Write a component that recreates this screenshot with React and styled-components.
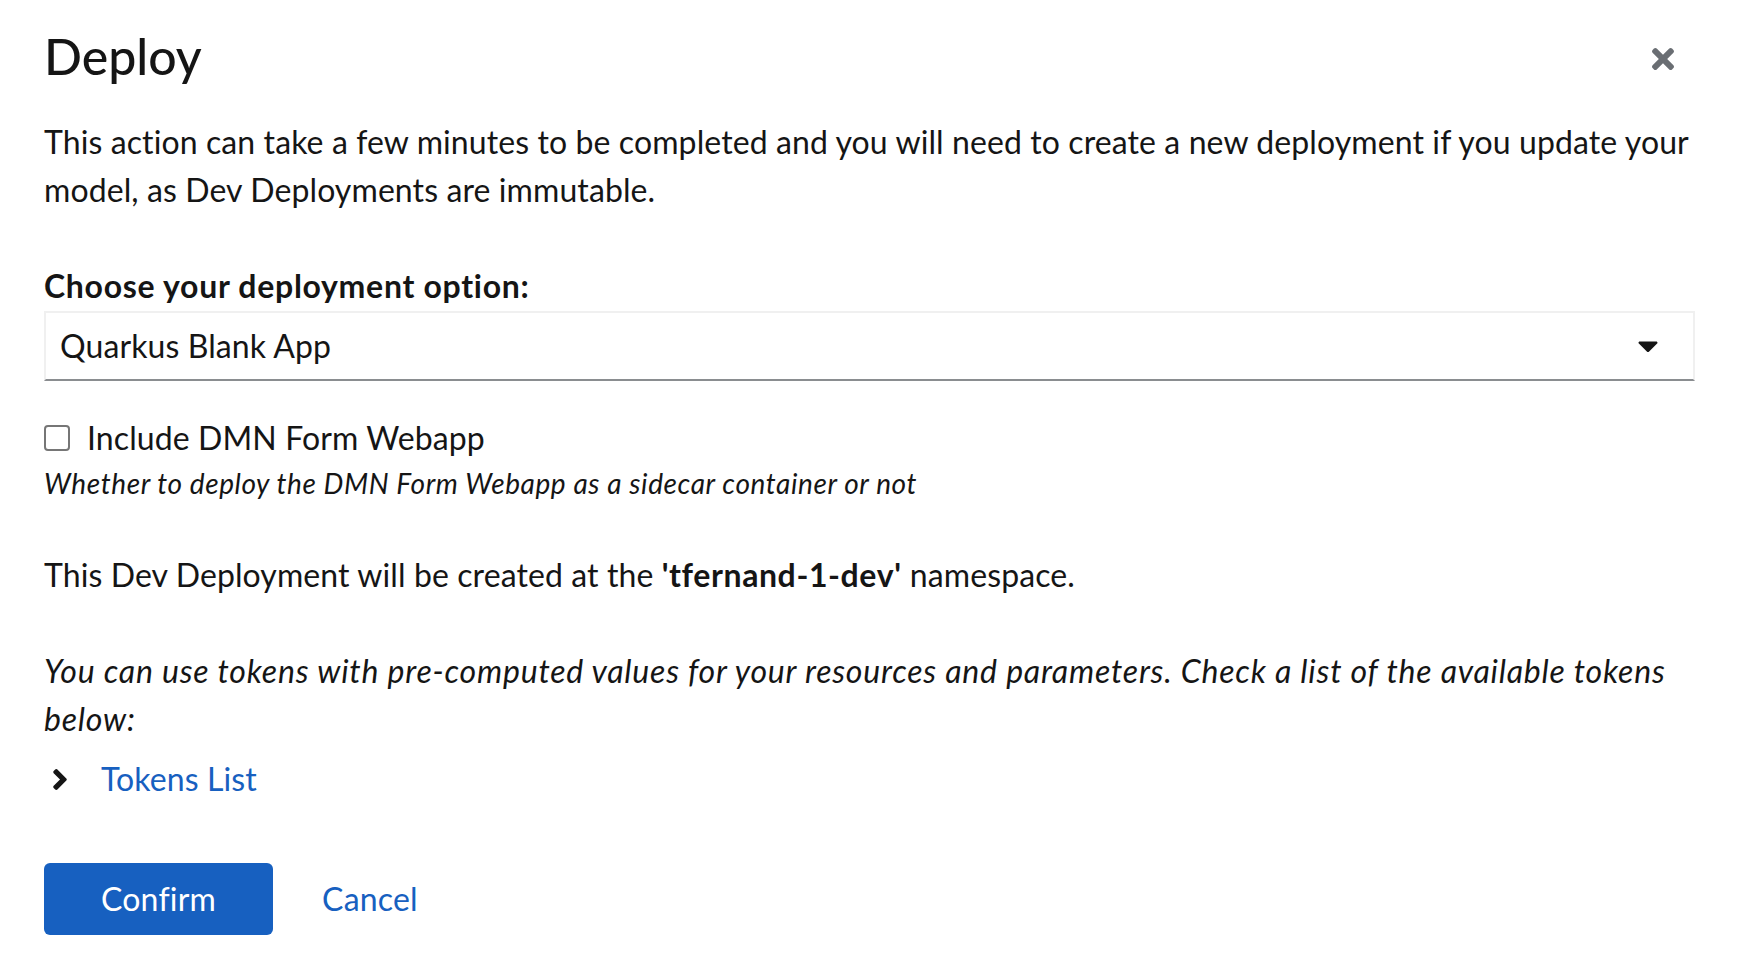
import React from "react";
import styled, { createGlobalStyle } from "styled-components";

const GlobalStyle = createGlobalStyle`
  html, body {
    margin: 0;
    padding: 0;
    background: #ffffff;
  }
  body {
    font-family: Lato, "Noto Sans", "Liberation Sans", sans-serif;
    color: #151515;
  }
  * { box-sizing: border-box; }
`;

const Modal = styled.div`
  position: relative;
  display: flex;
  flex-direction: column;
  padding: 25px 48px 40px 44px;
  font-size: 32px;
  line-height: 48px;
  letter-spacing: 0.1px;
`;

const Header = styled.header`
  display: flex;
  justify-content: space-between;
  align-items: flex-start;
`;

const Title = styled.h1`
  margin: 0;
  font-size: 50px;
  line-height: 62px;
  font-weight: 500;
  letter-spacing: 0;
  color: #151515;
`;

const CloseButton = styled.button`
  display: flex;
  align-items: center;
  justify-content: center;
  width: 64px;
  height: 62px;
  margin-top: 3px;
  padding: 0;
  border: none;
  background: transparent;
  color: #6a6e73;
  cursor: pointer;
`;

const Paragraph = styled.p`
  margin: ${(p) => p.$mt || 0}px 0 0 0;
  font-size: 32px;
  line-height: 48px;
  font-style: ${(p) => (p.$italic ? "italic" : "normal")};
  letter-spacing: ${(p) => (p.$italic ? "0.8px" : "0.1px")};
`;

const Strong = styled.b`
  font-weight: 700;
  letter-spacing: 0.6px;
`;

const FormGroup = styled.div`
  display: flex;
  flex-direction: column;
  margin-top: ${(p) => p.$mt || 0}px;
`;

const Label = styled.label`
  font-size: 32px;
  line-height: 48px;
  font-weight: 700;
  letter-spacing: 0.7px;
`;

const SelectBox = styled.div`
  display: flex;
  align-items: center;
  justify-content: space-between;
  height: 70px;
  margin-top: 1px;
  padding: 0 35px 0 14px;
  border: 2px solid #f0f0f0;
  border-bottom-color: #8a8d90;
  font-size: 32px;
  color: #151515;
  background: #fff;
`;

const CheckRow = styled.label`
  display: flex;
  align-items: center;
  gap: 17px;
  font-size: 32px;
  line-height: 48px;
`;

const Checkbox = styled.input`
  appearance: none;
  margin: 0;
  width: 26px;
  height: 26px;
  border: 2px solid #767676;
  border-radius: 4px;
  background: #fff;
  flex-shrink: 0;
`;

const Helper = styled.div`
  font-size: 28px;
  line-height: 42px;
  font-style: italic;
  letter-spacing: 0.6px;
  color: #151515;
`;

const ExpandToggle = styled.div`
  display: flex;
  align-items: center;
  height: 48px;
  margin-top: 12px;
`;

const ToggleIcon = styled.span`
  display: flex;
  align-items: center;
  justify-content: center;
  width: 32px;
  margin-right: 25px;
  color: #151515;
`;

const LinkText = styled.span`
  color: #1760c0;
  font-size: 32px;
`;

const Actions = styled.div`
  display: flex;
  gap: 16px;
  margin-top: 60px;
`;

const Button = styled.button`
  height: 72px;
  padding: 0 ${(p) => (p.$link ? 33 : 57)}px;
  border: none;
  border-radius: 6px;
  font-family: inherit;
  font-size: 32px;
  line-height: 48px;
  letter-spacing: 0.2px;
  cursor: pointer;
  background: ${(p) => (p.$link ? "transparent" : "#1760c0")};
  color: ${(p) => (p.$link ? "#1760c0" : "#ffffff")};
`;

const CloseIcon = () => (
  <svg width="22" height="22" viewBox="0 80 352 352" fill="currentColor" aria-hidden="true">
    <path d="M242.72 256l100.07-100.07c12.28-12.28 12.28-32.19 0-44.48l-22.24-22.24c-12.28-12.28-32.19-12.28-44.48 0L176 189.28 75.93 89.21c-12.28-12.28-32.19-12.28-44.48 0L9.21 111.45c-12.28 12.28-12.28 32.19 0 44.48L109.28 256 9.21 356.07c-12.28 12.28-12.28 32.19 0 44.48l22.24 22.24c12.28 12.28 32.2 12.28 44.48 0L176 322.72l100.07 100.07c12.28 12.28 32.2 12.28 44.48 0l22.24-22.24c12.28-12.28 12.28-32.19 0-44.48L242.72 256z" />
  </svg>
);

const CaretDown = () => (
  <svg width="20" height="11" viewBox="4 186 312 172" fill="currentColor" aria-hidden="true">
    <path d="M31.3 192h257.3c17.8 0 26.7 21.5 14.1 34.1L174.1 354.8c-7.8 7.8-20.5 7.8-28.3 0L17.2 226.1C4.6 213.5 13.5 192 31.3 192z" />
  </svg>
);

const AngleRight = () => (
  <svg width="14" height="21" viewBox="24 96 208 320" fill="currentColor" aria-hidden="true">
    <path d="M224.3 273l-136 136c-9.4 9.4-24.6 9.4-33.9 0l-22.6-22.6c-9.4-9.4-9.4-24.6 0-33.9l96.4-96.4-96.4-96.4c-9.4-9.4-9.4-24.6 0-33.9L54.3 103c9.4-9.4 24.6-9.4 33.9 0l136 136c9.5 9.4 9.5 24.6.1 34z" />
  </svg>
);

export default function App() {
  return (
    <>
      <GlobalStyle />
      <Modal>
        <Header>
          <Title>Deploy</Title>
          <CloseButton aria-label="Close">
            <CloseIcon />
          </CloseButton>
        </Header>

        <Paragraph $mt={28}>
          This action can take a few minutes to be completed and you will need to create a new deployment if you update your
          model, as Dev Deployments are immutable.
        </Paragraph>

        <FormGroup $mt={48}>
          <Label>Choose your deployment option:</Label>
          <SelectBox>
            <span>Quarkus Blank App</span>
            <CaretDown />
          </SelectBox>
        </FormGroup>

        <FormGroup $mt={33}>
          <CheckRow>
            <Checkbox type="checkbox" />
            Include DMN Form Webapp
          </CheckRow>
          <Helper>Whether to deploy the DMN Form Webapp as a sidecar container or not</Helper>
        </FormGroup>

        <Paragraph $mt={47}>
          This Dev Deployment will be created at the <Strong>'tfernand-1-dev'</Strong> namespace.
        </Paragraph>

        <Paragraph $mt={48} $italic>
          You can use tokens with pre-computed values for your resources and parameters. Check a list of the available tokens
          below:
        </Paragraph>

        <ExpandToggle>
          <ToggleIcon>
            <AngleRight />
          </ToggleIcon>
          <LinkText>Tokens List</LinkText>
        </ExpandToggle>

        <Actions>
          <Button>Confirm</Button>
          <Button $link>Cancel</Button>
        </Actions>
      </Modal>
    </>
  );
}
